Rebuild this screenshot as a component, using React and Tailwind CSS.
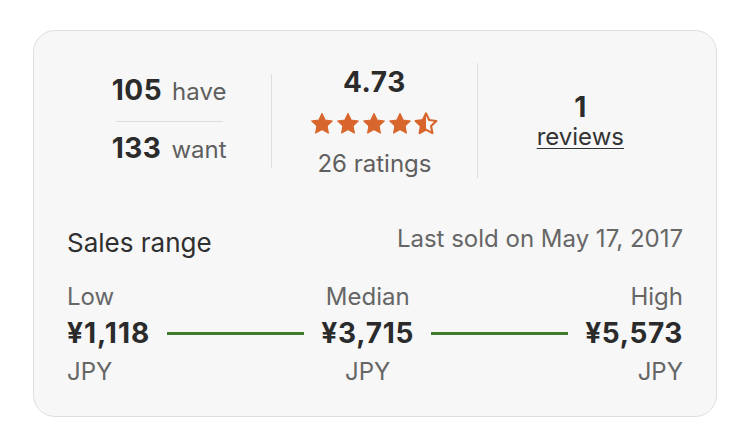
import React from "react";

const STAR =
  "M12 2.2l2.9 6.1 6.7.9-4.9 4.6 1.2 6.6L12 17.2l-5.9 3.2 1.2-6.6-4.9-4.6 6.7-.9L12 2.2z";

const Star = ({ half }) => (
  <svg viewBox="0 0 24 24" className="w-[26px] h-[26px]">
    {half ? (
      <>
        <defs>
          <clipPath id="halfClip">
            <rect x="0" y="0" width="12" height="24" />
          </clipPath>
        </defs>
        <path d={STAR} fill="#d8652b" clipPath="url(#halfClip)" />
        <path
          d={STAR}
          fill="none"
          stroke="#d8652b"
          strokeWidth="2"
          strokeLinejoin="round"
        />
      </>
    ) : (
      <path
        d={STAR}
        fill="#d8652b"
        stroke="#d8652b"
        strokeWidth="1"
        strokeLinejoin="round"
      />
    )}
  </svg>
);

const App = () => {
  return (
    <div className="min-h-screen bg-white pt-[30px] pl-[33px] font-['Inter',sans-serif]">
      <div className="w-[684px] h-[387px] rounded-[22px] border border-[#dedede] bg-[#f7f7f7] px-[33px] pt-[32px]">
        {/* STATS */}
        <div className="grid grid-cols-3 items-center">
          <div className="flex justify-center border-r border-[#dedede]">
            <div className="flex flex-col">
              <div className="leading-[32px] whitespace-nowrap">
                <span className="text-[28px] font-bold tracking-[0.5px] text-[#2b2b2b]">105</span>
                <span className="text-[24px] text-[#5f5f5f] ml-[10px]">have</span>
              </div>
              <div className="mx-1 mt-[11px] mb-[10px] h-px bg-[#dcdcdc]" />
              <div className="leading-[32px] whitespace-nowrap">
                <span className="text-[28px] font-bold tracking-[0.5px] text-[#2b2b2b]">133</span>
                <span className="text-[24px] text-[#5f5f5f] ml-[10px]">want</span>
              </div>
            </div>
          </div>

          <div className="flex flex-col items-center border-r border-[#dedede] pt-[3px]">
            <div className="text-[28px] leading-[32px] font-bold tracking-[0.6px] text-[#2b2b2b]">
              4.73
            </div>
            <div className="flex mt-[13px]">
              <Star />
              <Star />
              <Star />
              <Star />
              <Star half />
            </div>
            <div className="mt-[13px] text-[24px] leading-[28px] text-[#5f5f5f]">
              26 ratings
            </div>
          </div>

          <div className="flex flex-col items-center">
            <div className="text-[28px] leading-[32px] font-bold text-[#2b2b2b]">1</div>
            <a className="text-[24px] leading-[28px] text-[#333] underline underline-offset-[3px] decoration-1">
              reviews
            </a>
          </div>
        </div>

        {/* SALES RANGE */}
        <div className="mt-[46px] flex items-start justify-between">
          <h3 className="mt-[3px] text-[26px] leading-[32px] text-[#2f2f2f]">
            Sales range
          </h3>
          <span className="text-[24px] leading-[30px] text-[#666]">
            Last sold on May 17, 2017
          </span>
        </div>

        <div className="mt-[23px] grid grid-cols-[auto_1fr_auto_1fr_auto] items-center gap-y-1">
          <span className="text-[24px] leading-[30px] text-[#666]">Low</span>
          <span />
          <span className="text-center text-[24px] leading-[30px] text-[#666]">Median</span>
          <span />
          <span className="text-right text-[24px] leading-[30px] text-[#666]">High</span>

          <span className="text-[28px] leading-[34px] font-bold tracking-[1px] text-[#2b2b2b]">¥1,118</span>
          <div className="mx-[17px] h-[3px] bg-[#3f7a2d]" />
          <span className="text-center text-[28px] leading-[34px] font-bold tracking-[0.8px] text-[#2b2b2b]">¥3,715</span>
          <div className="mx-[17px] h-[3px] bg-[#3f7a2d]" />
          <span className="text-right text-[28px] leading-[34px] font-bold tracking-[0.6px] text-[#2b2b2b]">¥5,573</span>

          <span className="pt-[3px] text-[24px] leading-[30px] text-[#666]">JPY</span>
          <span />
          <span className="pt-[3px] text-center text-[24px] leading-[30px] text-[#666]">JPY</span>
          <span />
          <span className="pt-[3px] text-right text-[24px] leading-[30px] text-[#666]">JPY</span>
        </div>
      </div>
    </div>
  );
};

export default App;
